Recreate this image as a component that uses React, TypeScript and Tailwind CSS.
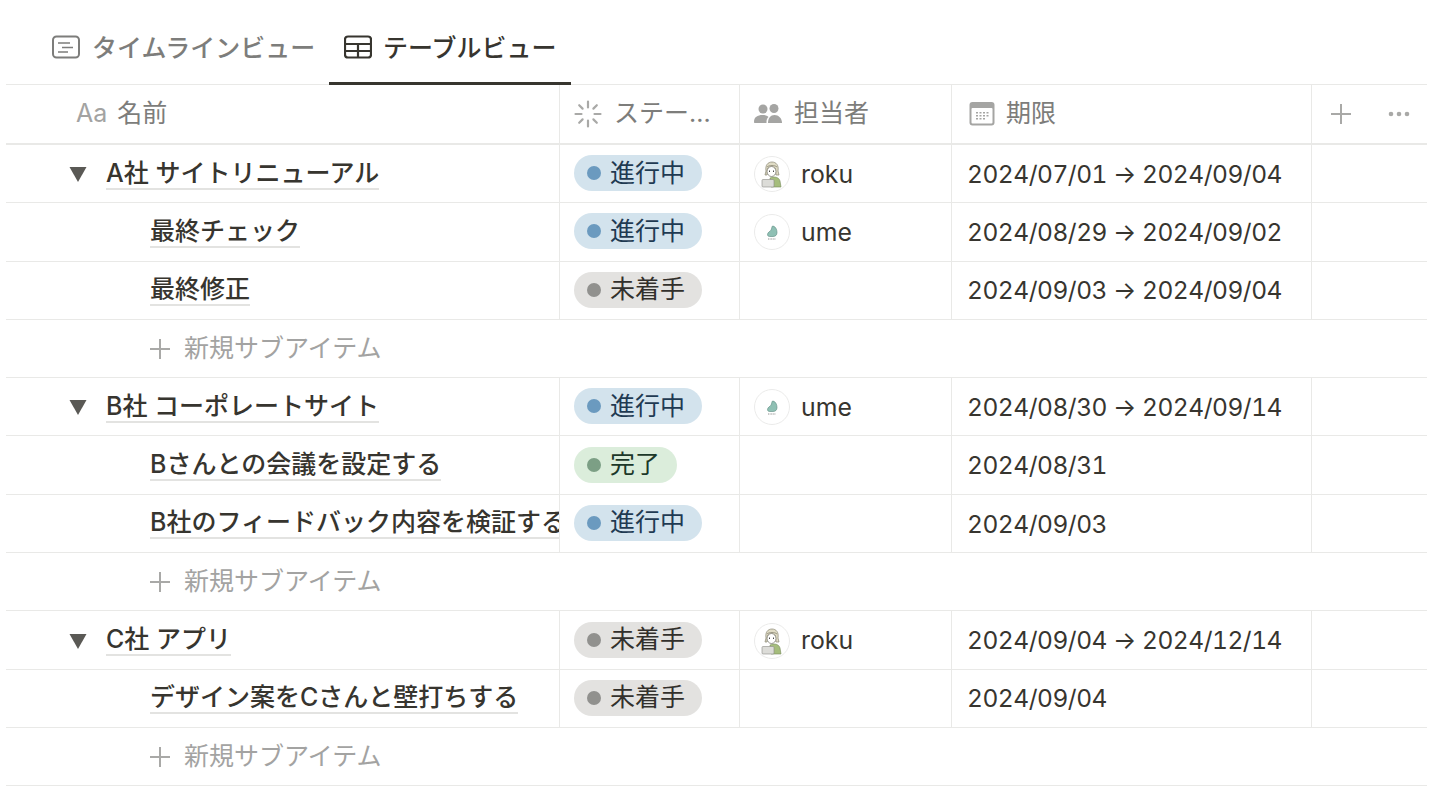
import type { ReactNode } from 'react'

type Status = '進行中' | '未着手' | '完了'

const statusStyles: Record<Status, { pill: string; dot: string; text: string; width: string }> = {
  進行中: { pill: 'bg-[#d3e3ed]', dot: 'bg-[#6b9abf]', text: 'text-[#1f3a52]', width: 'w-[128px]' },
  未着手: { pill: 'bg-[#e3e2e0]', dot: 'bg-[#91918e]', text: 'text-[#32302c]', width: 'w-[128px]' },
  完了: { pill: 'bg-[#dbeddb]', dot: 'bg-[#7c9f85]', text: 'text-[#1c3829]', width: 'w-[103px]' },
}

type Item =
  | { kind: 'add' }
  | {
      kind: 'row'
      name: string
      top?: boolean
      status: Status
      person?: 'roku' | 'ume'
      date: string
    }

const items: Item[] = [
  { kind: 'row', top: true, name: 'A社 サイトリニューアル', status: '進行中', person: 'roku', date: '2024/07/01 → 2024/09/04' },
  { kind: 'row', name: '最終チェック', status: '進行中', person: 'ume', date: '2024/08/29 → 2024/09/02' },
  { kind: 'row', name: '最終修正', status: '未着手', date: '2024/09/03 → 2024/09/04' },
  { kind: 'add' },
  { kind: 'row', top: true, name: 'B社 コーポレートサイト', status: '進行中', person: 'ume', date: '2024/08/30 → 2024/09/14' },
  { kind: 'row', name: 'Bさんとの会議を設定する', status: '完了', date: '2024/08/31' },
  { kind: 'row', name: 'B社のフィードバック内容を検証する', status: '進行中', date: '2024/09/03' },
  { kind: 'add' },
  { kind: 'row', top: true, name: 'C社 アプリ', status: '未着手', person: 'roku', date: '2024/09/04 → 2024/12/14' },
  { kind: 'row', name: 'デザイン案をCさんと壁打ちする', status: '未着手', date: '2024/09/04' },
  { kind: 'add' },
]

function RokuAvatar() {
  return (
    <svg viewBox="0 0 36 36" className="size-9 shrink-0">
      <circle cx="18" cy="18" r="17.5" fill="#fff" stroke="#ebebea" />
      <path d="M12 15c-1-6 2-9 6-9s7 3 6 9l1 4h-3l-1-7h-7l-1 7h-2z" fill="#e0dcc6" stroke="#8a8674" strokeWidth="0.7" />
      <path d="M13 11c2-2 8-2 10 0" fill="none" stroke="#8a8674" strokeWidth="0.8" />
      <ellipse cx="17.500" cy="15.500" rx="4.500" ry="5" fill="#fff" stroke="#6d6b62" strokeWidth="0.7" />
      <path d="M15.500 14.500v1.500M19.500 14.500v1.500" stroke="#333" strokeWidth="0.9" />
      <path d="M16 22c4-2 9-1 10 3l1 6H17z" fill="#a5bd7c" stroke="#75895a" strokeWidth="0.6" />
      <rect x="8" y="23.500" width="12" height="7.500" rx="1" fill="#dcdcd8" stroke="#8b8b86" strokeWidth="0.6" />
    </svg>
  )
}

function UmeAvatar() {
  return (
    <svg viewBox="0 0 36 36" className="size-9 shrink-0">
      <circle cx="18" cy="18" r="17.5" fill="#fff" stroke="#ebebea" />
      <path d="M19 12c2.500.5 4 3.500 4 6.500 0 2.500-1.500 4-4 4h-3.500c-2 0-2.500-2-1.500-3.500s3-2 3.500-4c.4-1.500.5-3.300 1.500-3z" fill="#8fc0b4" stroke="#5a8a80" strokeWidth="0.6" />
      <path d="M14 25h8" stroke="#666" strokeWidth="0.7" strokeDasharray="1 0.6" />
    </svg>
  )
}

function StatusPill({ status }: { status: Status }) {
  const s = statusStyles[status]
  return (
    <span className={`mb-px flex h-9 items-center rounded-full pl-[13px] ${s.pill} ${s.width}`}>
      <span className={`mr-[9px] size-[14px] shrink-0 rounded-full ${s.dot}`} />
      <span className={`text-[25px] leading-none ${s.text}`}>{status}</span>
    </span>
  )
}

function Cell({ className, children }: { className: string; children?: ReactNode }) {
  return <div className={`flex h-full shrink-0 items-center border-r border-[#e9e9e7] ${className}`}>{children}</div>
}

function Row({ item }: { item: Extract<Item, { kind: 'row' }> }) {
  return (
    <div className="flex h-[58.3px] border-b border-[#e9e9e7]">
      <Cell className="w-[554px] overflow-hidden pt-px">
        {item.top && (
          <svg viewBox="0 0 18 18" className="ml-[63px] mr-[19px] size-[18px] shrink-0">
            <path d="M0.500 2h17L9 17z" fill="#5a5955" />
          </svg>
        )}
        <span
          className={`whitespace-nowrap border-b-2 border-[#e3e3e1] text-[25px] font-medium leading-[29px] text-[#37352f] ${
            item.top ? '' : 'ml-[144px]'
          }`}
        >
          {item.name}
        </span>
      </Cell>
      <Cell className="w-[180px] pl-[14px]">
        <StatusPill status={item.status} />
      </Cell>
      <Cell className="w-[212px] pl-[14px] pt-px">
        {item.person && (
          <>
            {item.person === 'roku' ? <RokuAvatar /> : <UmeAvatar />}
            <span className="ml-[11px] text-[24.800px] text-[#37352f]">{item.person}</span>
          </>
        )}
      </Cell>
      <Cell className="w-[360px] pl-[15px] pt-px">
        <span className="text-[24.500px] tracking-[-0.48px] tabular-nums text-[#37352f]">{item.date}</span>
      </Cell>
    </div>
  )
}

function AddRow() {
  return (
    <div className="flex h-[58.3px] items-center border-b border-[#e9e9e7] pl-[144px]">
      <svg viewBox="0 0 20 20" className="size-5 shrink-0" fill="none" stroke="#a9a9a7" strokeWidth="2">
        <path d="M10 0v20M0 10h20" />
      </svg>
      <span className="ml-[14px] text-[25px] text-[#a3a3a2]">新規サブアイテム</span>
    </div>
  )
}

export default function App() {
  return (
    <div
      className="h-[788px] w-[1440px] overflow-hidden bg-white"
      style={{ fontFamily: 'Inter, "Noto Sans CJK JP", sans-serif' }}
    >
      <div className="ml-[6px] w-[1421px] pt-[14px]">
        {/* Tabs */}
        <div className="flex h-[71px] border-b border-[#e9e9e7]">
          <div className="ml-[46px] flex w-[277px] items-center pb-px">
            <svg viewBox="0 0 28 24" className="mb-[4px] h-6 w-7 shrink-0" fill="none" stroke="#7d7d7b" strokeWidth="2">
              <rect x="1" y="1.500" width="26" height="21" rx="3.500" />
              <path d="M6 8h12M10 12.500h11M6 17h10" strokeWidth="1.600" />
            </svg>
            <span className="ml-[12px] text-[25px] font-medium text-[#7d7d7b]">タイムラインビュー</span>
          </div>
          <div className="relative flex w-[242px] items-center pb-px pl-[15px]">
            <svg viewBox="0 0 28 24" className="mb-[4px] h-6 w-7 shrink-0" fill="none" stroke="#37352f" strokeWidth="2.200">
              <rect x="1" y="1.500" width="26" height="21" rx="3" />
              <path d="M1 9h26M1 16h26M14 9v13.500" />
            </svg>
            <span className="ml-[11px] text-[25px] font-medium text-[#37352f]">テーブルビュー</span>
            <span className="absolute inset-x-0 -bottom-px h-[3px] bg-[#37352f]" />
          </div>
        </div>

        {/* Header */}
        <div className="flex h-[60px] border-b-2 border-[#e9e9e7] text-[25px] text-[#7d7d7b]">
          <Cell className="w-[554px] pl-[70px]">
            <span className="text-[25px] text-[#a3a3a2]">Aa</span>
            <span className="ml-[10px]">名前</span>
          </Cell>
          <Cell className="w-[180px] pl-[14px]">
            <svg viewBox="0 0 28 28" className="size-7 shrink-0" fill="none" stroke="#a9a9a7" strokeWidth="2.200" strokeLinecap="round">
              <path d="M14 1.500v6M14 20.500v6M1.500 14h6M20.500 14h6M5.200 5.200l3.400 3.400M19.400 19.400l3.400 3.400M22.800 5.200l-3.400 3.400M8.600 19.400l-3.400 3.400" />
            </svg>
            <span className="ml-[12px]">ステー...</span>
          </Cell>
          <Cell className="w-[212px] pl-[14px]">
            <svg viewBox="0 0 28 22" className="h-[22px] w-7 shrink-0" fill="#a5a5a3">
              <circle cx="9" cy="6" r="4.500" />
              <circle cx="20" cy="5.500" r="4.500" />
              <path d="M0 19c0-5 3.500-7 8.500-7 2.500 0 4.500.5 6 2-1.500 1.200-2 3-2 5v1H1c-.6 0-1-.4-1-1z" />
              <path d="M14 20c0-5 2.500-8 6.500-8s7.500 3 7.500 8z" />
            </svg>
            <span className="ml-[12px]">担当者</span>
          </Cell>
          <Cell className="w-[360px] pl-[17px]">
            <svg viewBox="0 0 26 24" className="h-6 w-[26px] shrink-0">
              <rect width="25" height="23.500" x="0.500" rx="3" fill="#a5a5a3" />
              <rect x="2.500" y="6" width="21" height="15.500" rx="1" fill="#fff" />
              <g fill="#a5a5a3">
                <path d="M7 10h2v1.500H7zM10.500 10h2v1.500h-2zM14 10h2v1.500h-2zM17.500 10h2v1.500h-2zM7 13h2v1.500H7zM10.500 13h2v1.500h-2zM14 13h2v1.500h-2zM17.500 13h2v1.500h-2zM7 16h2v1.500H7zM10.500 16h2v1.500h-2zM14 16h2v1.500h-2z" />
              </g>
            </svg>
            <span className="ml-[11px]">期限</span>
          </Cell>
          <div className="flex flex-1 items-center pl-[19px]">
            <svg viewBox="0 0 20 20" className="size-5 shrink-0" fill="none" stroke="#a9a9a7" strokeWidth="2">
              <path d="M10 0v20M0 10h20" />
            </svg>
            <svg viewBox="0 0 22 6" className="ml-[37px] h-[6px] w-[22px] shrink-0" fill="#a9a9a7">
              <circle cx="3" cy="3" r="2.300" />
              <circle cx="11" cy="3" r="2.300" />
              <circle cx="19" cy="3" r="2.300" />
            </svg>
          </div>
        </div>

        {items.map((item, i) =>
          item.kind === 'add' ? <AddRow key={i} /> : <Row key={i} item={item} />,
        )}
      </div>
    </div>
  )
}
